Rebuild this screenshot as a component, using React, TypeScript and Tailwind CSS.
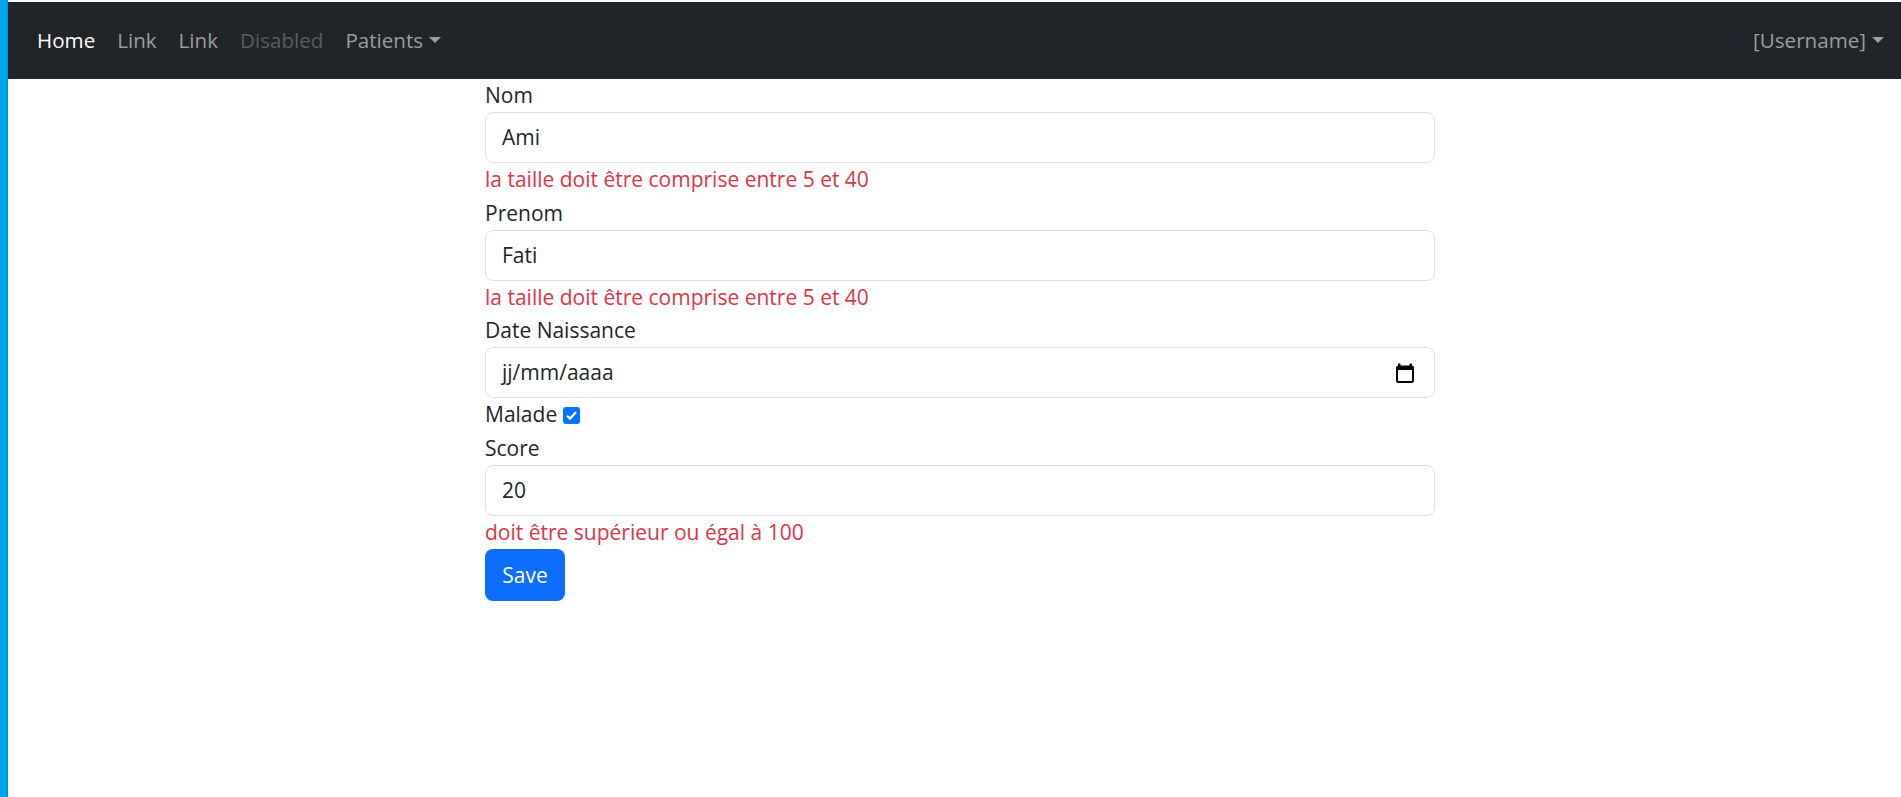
import { useState } from "react";

const font = { fontFamily: '"Open Sans", "Noto Sans", sans-serif' };

function Caret() {
  return (
    <span className="ml-[6px] inline-block h-0 w-0 border-l-[6px] border-r-[6px] border-t-[6px] border-l-transparent border-r-transparent border-t-current align-middle" />
  );
}

function Navbar() {
  return (
    <nav className="flex h-[77px] items-center justify-between bg-[#212529] pl-[18px] pr-[6px] text-[20.6px]">
      <ul className="flex items-center">
        <li className="px-[11px] text-white">Home</li>
        <li className="px-[11px] text-[#9b9d9f]">Link</li>
        <li className="px-[11px] text-[#9b9d9f]">Link</li>
        <li className="px-[11px] text-[#595c5f]">Disabled</li>
        <li className="flex items-center px-[11px] text-[#9b9d9f]">
          Patients
          <Caret />
        </li>
      </ul>
      <div className="flex items-center px-[11px] text-[#9b9d9f]">
        [Username]
        <Caret />
      </div>
    </nav>
  );
}

function TextField({ label, value, error }: { label: string; value: string; error?: string }) {
  return (
    <div className="flex flex-col">
      <label>{label}</label>
      <div className="flex h-[51px] items-center rounded-[8px] border border-[#dee2e6] px-[16px] text-[#212529]">
        {value}
      </div>
      {error && <div className="text-[#dc3545]">{error}</div>}
    </div>
  );
}

function CalendarIcon() {
  return (
    <svg width="18" height="20" viewBox="0 0 18 20">
      <rect x="1" y="3.5" width="16" height="15.5" rx="1.5" fill="none" stroke="#000" strokeWidth="2" />
      <rect x="1" y="3" width="16" height="4" fill="#000" />
      <rect x="2" y="0.5" width="2.5" height="4" rx="0.5" fill="#000" />
      <rect x="13.5" y="0.5" width="2.5" height="4" rx="0.5" fill="#000" />
    </svg>
  );
}

export default function App() {
  const [malade] = useState(true);
  const sizeError = "la taille doit être comprise entre 5 et 40";

  return (
    <div className="flex min-h-[797px] bg-white text-[21px] leading-[33.3px] text-[#212529]" style={font}>
      <div className="w-[8px] shrink-0 border-r border-[#0093cf] bg-[#00a6e8]" />
      <div className="flex flex-1 flex-col pt-[2px]">
        <Navbar />
        <form className="ml-[477px] flex w-[950px] flex-col">
          <TextField label="Nom" value="Ami" error={sizeError} />
          <TextField label="Prenom" value="Fati" error={sizeError} />
          <div className="flex flex-col">
            <label>Date Naissance</label>
            <div className="flex h-[51px] items-center justify-between rounded-[8px] border border-[#dee2e6] pl-[16px] pr-[20px]">
              <span>jj/mm/aaaa</span>
              <CalendarIcon />
            </div>
          </div>
          <div className="flex items-center gap-[6px]">
            <span>Malade</span>
            {malade && (
              <span className="flex h-[17px] w-[17px] items-center justify-center rounded-[3px] bg-[#0075ff]">
                <svg width="13" height="13" viewBox="0 0 13 13">
                  <path d="M2 6.8 L5 9.6 L11 3.2" fill="none" stroke="#fff" strokeWidth="2.2" />
                </svg>
              </span>
            )}
          </div>
          <TextField label="Score" value="20" error="doit être supérieur ou égal à 100" />
          <div>
            <button
              type="button"
              className="flex h-[52px] w-[80px] items-center justify-center rounded-[8px] bg-[#0d6efd] text-white"
            >
              Save
            </button>
          </div>
        </form>
      </div>
    </div>
  );
}
